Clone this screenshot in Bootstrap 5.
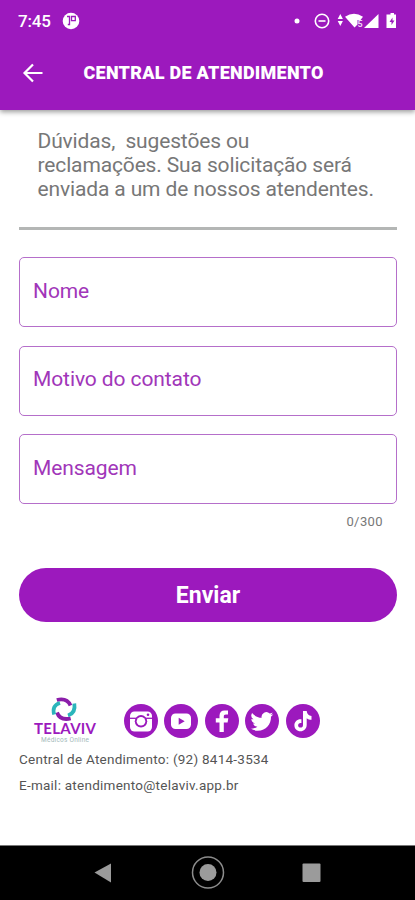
<!DOCTYPE html>
<html lang="pt-BR">
<head>
<meta charset="utf-8">
<meta name="viewport" content="width=device-width, initial-scale=1">
<title>Central de Atendimento</title>
<link href="https://cdn.jsdelivr.net/npm/bootstrap@5.3.0/dist/css/bootstrap.min.css" rel="stylesheet">
<style>
:root{--brand:#9c19bd}
body{font-family:Roboto,"Liberation Sans",sans-serif;color:#606060;height:900px;overflow:hidden}
svg{display:block;flex-shrink:0}
.top-area{background:var(--brand);height:110px;box-shadow:0 2px 5px rgba(0,0,0,.4)}
.status{height:42px;padding-left:18px;padding-right:17px}
.clock{font-size:17px;font-weight:500;line-height:20px;width:44px;letter-spacing:-.2px}
.app-bar{height:62px;padding-left:22px}
.screen-title{font-size:18px;font-weight:900;line-height:22px;margin-left:39.500px;letter-spacing:.27px}
.intro{font-size:21px;font-weight:400;line-height:24px;margin:19px 0 0 37.500px;height:72px;color:#777;letter-spacing:-.14px;white-space:pre}
.rule{height:3px;background:#b4b6b5;margin:26px 18px 0 19px}
.fields{padding:27px 18px 0 19px;gap:18.500px}
.field-box{height:70px;border:1px solid #b56fca;border-radius:5px;background:#fff;padding:0 13px 3px;font-size:21px;font-weight:400;letter-spacing:-.1px;color:#a136b9}
.field-box::placeholder{color:#a136b9;opacity:1}
.counter{font-size:13px;line-height:16px;margin:10px 32px 0 0;letter-spacing:.4px;color:#777}
.send{height:54px;margin:38px 18px 0 19px;font-size:23px;font-weight:700;background:var(--brand);color:#fff;padding:2px 0 0}
.send:hover{background:#8913a8;color:#fff}
.socials{padding-left:31px;margin-top:73px;height:52px}
.icons{gap:6.500px;margin-left:23.500px}
.contact{padding-left:19px;font-size:13.500px;line-height:25.500px;letter-spacing:.25px;color:#555}
.nav-keys{height:55px;background:#000;border-top:1px solid #777}
</style>
<script src="https://cdn.jsdelivr.net/npm/bootstrap@5.3.0/dist/js/bootstrap.bundle.min.js"></script>
</head>
<body class="d-flex flex-column bg-white m-0">
<header class="top-area text-white flex-shrink-0">
  <div class="status d-flex align-items-center">
    <span class="clock">7:45</span>
    <svg width="18" height="18" viewBox="0 0 18 18"><circle cx="9" cy="9" r="8.300" fill="#fff"/><path d="M5 4.500h2.500v8H5.800M9.500 4.500h3.800v4.200H9.500z" fill="none" stroke="#9c19bd" stroke-width="1.300"/></svg>
    <svg class="ms-auto" width="106" height="18" viewBox="0 0 106 18" fill="#fff">
      <circle cx="5" cy="9" r="2.500"/>
      <circle cx="30" cy="9" r="6.700" fill="none" stroke="#fff" stroke-width="1.600"/><path d="M26.500 8.200h7v1.600h-7z"/>
      <path d="M48.300 2l2.600 5h-5.200zM48.300 14l2.600-5h-5.200z"/>
      <path d="M53 4.700q9-6 18 0l-2.500 3.200h-3v4.600l-3 3z"/><text x="65.500" y="15" font-size="9" font-weight="700" fill="#efd5f6">5</text>
      <path d="M86.500 2v14H72z"/>
      <path d="M96.500 2.600h2V1h3.500v1.600h2v13.400h-9.500V2.600z"/><path d="M100.500 5.500l-3 4.500h2v3l3-4.500h-2z" fill="#9c19bd"/>
    </svg>
  </div>
  <div class="app-bar d-flex align-items-center">
    <svg width="22" height="20" viewBox="0 0 22 20" fill="none" stroke="#fff" stroke-width="2.200"><path d="M20.500 10H3M11 1.500L2.500 10l8.500 8.500"/></svg>
    <h1 class="screen-title mb-0">CENTRAL DE ATENDIMENTO</h1>
  </div>
</header>
<main class="flex-grow-1">
  <p class="intro">Dúvidas,  sugestões ou
reclamações. Sua solicitação será
enviada a um de nossos atendentes.</p>
  <div class="rule"></div>
  <form>
    <div class="fields d-flex flex-column">
      <input class="field-box w-100" placeholder="Nome" aria-label="Nome">
      <input class="field-box w-100" placeholder="Motivo do contato" aria-label="Motivo do contato">
      <input class="field-box w-100" placeholder="Mensagem" aria-label="Mensagem" maxlength="300">
    </div>
    <div class="counter text-end">0/300</div>
    <div class="d-flex"><button type="button" class="send btn rounded-pill flex-grow-1">Enviar</button></div>
  </form>
  <div class="socials d-flex align-items-center">
    <svg width="69" height="52" viewBox="0 0 69 52">
      <g fill="none" stroke-width="3.800"><path d="M25.800 5Q36 2.500 39.500 10.500" stroke="#8b1eaa"/><path d="M43.300 8.500Q45 18 37 20.500" stroke="#2bb5bb"/><path d="M39.700 23.500Q29 25.800 26 17.500" stroke="#8b1eaa"/><path d="M23.200 19.500Q20.500 10.500 29 8" stroke="#2bb5bb"/></g>
      <text x="3" y="38.500" font-family="Lato,sans-serif" font-size="15" font-weight="700" fill="#9c19bd" textLength="62" lengthAdjust="spacing">TELAVIV</text>
      <text x="10" y="47" font-size="6.500" fill="#9fb9b9" textLength="48">Médicos Online</text>
    </svg>
    <div class="icons d-flex align-items-center">
      <svg width="34" height="34" viewBox="0 0 34 34"><circle cx="17" cy="17" r="17" fill="#9c19bd"/><rect x="6" y="7.500" width="22" height="20" rx="4.500" fill="#fff"/><path d="M6 14.300H28" stroke="#9c19bd" stroke-width="1.300"/><circle cx="17" cy="17.300" r="6.200" fill="#9c19bd"/><circle cx="17" cy="17.300" r="4.300" fill="#fff"/><circle cx="24" cy="10.800" r="1.300" fill="#9c19bd"/></svg>
      <svg width="34" height="34" viewBox="0 0 34 34"><circle cx="17" cy="17" r="17" fill="#9c19bd"/><rect x="7" y="9.500" width="20" height="15.500" rx="4.500" fill="#fff"/><path d="M14.700 13.700l6 3.500-6 3.500z" fill="#9c19bd"/></svg>
      <svg width="34" height="34" viewBox="0 0 34 34"><circle cx="17" cy="17" r="17" fill="#9c19bd"/><path d="M14.500 28v-9.500H10.800v-4.300h3.700v-2.700c0-3.300 2-5.100 5-5.100 1.800 0 3.500.2 3.500.2v3.800h-2c-1.700 0-2.200.8-2.200 2v1.800h4.500l-.7 4.300h-3.800V28z" fill="#fff"/></svg>
      <svg width="34" height="34" viewBox="0 0 34 34"><circle cx="17" cy="17" r="17" fill="#9c19bd"/><path transform="translate(5.500 6) scale(.95)" d="M23.950 4.570a10 10 0 01-2.820.770 4.960 4.960 0 002.160-2.720 9.900 9.900 0 01-3.120 1.180 4.920 4.920 0 00-8.380 4.480C7.690 8.100 4.070 6.130 1.640 3.160a4.920 4.920 0 001.520 6.570 4.900 4.900 0 01-2.230-.610v.060a4.920 4.920 0 003.950 4.830 5 5 0 01-2.210.080 4.940 4.940 0 004.600 3.420A9.870 9.870 0 010 19.540a14 14 0 007.550 2.210c9.050 0 14-7.500 14-13.980 0-.210 0-.420-.020-.630a9.940 9.940 0 002.460-2.550z" fill="#fff"/></svg>
      <svg width="34" height="34" viewBox="0 0 34 34"><circle cx="17" cy="17" r="17" fill="#9c19bd"/><path d="M17 7h3.700c.3 3 2 4.700 4.800 5v3.700c-1.900 0-3.400-.5-4.800-1.500v6.600c0 4-2.900 6.500-6.200 6.500-3.500 0-6.100-2.700-6.100-6.100 0-3.700 3.100-6.500 7-6v3.800c-1.900-.5-3.300.6-3.300 2.200 0 1.400 1 2.400 2.400 2.400 1.500 0 2.500-1 2.500-2.700z" fill="#fff"/></svg>
    </div>
  </div>
  <div class="contact">
    <div>Central de Atendimento: (92) 8414-3534</div>
    <div>E-mail: atendimento@telaviv.app.br</div>
  </div>
</main>
<footer class="nav-keys flex-shrink-0">
  <svg width="415" height="54" viewBox="0 0 415 54" fill="#9b9b9b"><path d="M94.500 26.500L111 17.500v19z"/><circle cx="208" cy="26.500" r="8.500"/><circle cx="208" cy="26.500" r="15.500" fill="none" stroke="#8c8c8c" stroke-width="1.500"/><rect x="302.500" y="17.500" width="18" height="18.500" rx="1"/></svg>
</footer>
</body>
</html>
